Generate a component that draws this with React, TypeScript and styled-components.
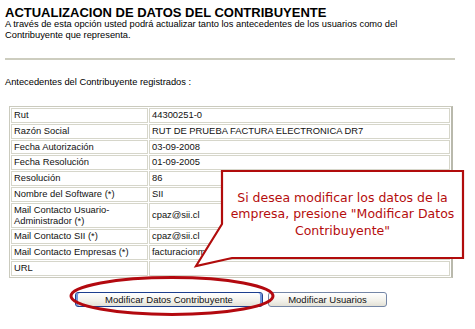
import React from "react";
import styled, { createGlobalStyle } from "styled-components";

const GlobalStyle = createGlobalStyle`
	html, body {
		margin: 0;
		padding: 0;
		background: #ffffff;
	}
	body {
		font-family: "Liberation Sans", Arial, sans-serif;
		color: #000000;
	}
`;

const Page = styled.div`
	position: relative;
	width: 475px;
	height: 329px;
	box-sizing: border-box;
	padding: 6px 0 0 5px;
	overflow: hidden;
`;

const Title = styled.h1`
	margin: 0;
	font-size: 13px;
	line-height: 13px;
	font-weight: bold;
`;

const Intro = styled.p`
	margin: 0;
	font-size: 9.3px;
	line-height: 11px;
	width: 420px;
`;

const Rule = styled.hr`
	margin: 17px 0 0 0;
	width: 450px;
	border: none;
	border-top: 2px solid #cdcdbf;
	height: 0;
`;

const Caption = styled.p`
	margin: 17px 0 0 0;
	font-size: 9.3px;
	line-height: 11px;
`;

const DataTable = styled.table`
	margin: 18px 0 0 4px;
	width: 444px;
	border-collapse: separate;
	border-spacing: 1px;
	border: 1px solid #cbcbbe;
	border-right: 2px solid #b9b9ac;
	font-size: 9.4px;
	line-height: 10.8px;
`;

const Cell = styled.td<{ $label?: boolean }>`
	border: 1px solid #d6d6ca;
	padding: 1px 2px;
	vertical-align: middle;
	width: ${(p) => (p.$label ? "131px" : "auto")};
	color: #111111;
`;

const ButtonRow = styled.div`
	display: flex;
	justify-content: center;
	gap: 5px;
	width: 444px;
	margin: 14px 0 0 4px;
`;

const Button = styled.button<{ $focused?: boolean; $width: number }>`
	width: ${(p) => p.$width}px;
	height: 15px;
	padding: 0;
	font-family: "Liberation Sans", Arial, sans-serif;
	font-size: 9.5px;
	line-height: 11px;
	color: #111111;
	border-radius: 3px;
	background: linear-gradient(#ffffff, #f2f1ea 60%, #e3e1d6);
	border: 1px solid ${(p) => (p.$focused ? "#1d3f8e" : "#7486a6")};
	box-shadow: ${(p) =>
		p.$focused ? "inset 2px 0 0 #6f95dc, inset -2px 0 0 #6f95dc" : "none"};
`;

const Callout = styled.div`
	position: absolute;
	left: 190px;
	top: 165px;
	width: 280px;
	height: 105px;
`;

const CalloutShape = styled.svg`
	position: absolute;
	left: 0;
	top: 0;
`;

const CalloutText = styled.div`
	position: absolute;
	left: 32px;
	top: 6px;
	width: 241px;
	height: 87px;
	display: flex;
	align-items: center;
	justify-content: center;
	text-align: center;
	font-family: "DejaVu Sans", Verdana, sans-serif;
	font-size: 12.5px;
	line-height: 16.5px;
	color: #b50d0d;
`;

const Highlight = styled.svg`
	position: absolute;
	left: 68px;
	top: 275px;
`;

const rows: [string, string][] = [
	["Rut", "44300251-0"],
	["Razón Social", "RUT DE PRUEBA FACTURA ELECTRONICA DR7"],
	["Fecha Autorización", "03-09-2008"],
	["Fecha Resolución", "01-09-2005"],
	["Resolución", "86"],
	["Nombre del Software (*)", "SII"],
	["Mail Contacto Usuario-Administrador (*)", "cpaz@sii.cl"],
	["Mail Contacto SII (*)", "cpaz@sii.cl"],
	["Mail Contacto Empresas (*)", "facturacionmipyme@sii.cl"],
	["URL", ""],
];

export default function App() {
	return (
		<Page>
			<GlobalStyle />
			<Title>ACTUALIZACION DE DATOS DEL CONTRIBUYENTE</Title>
			<Intro>
				A través de esta opción usted podrá actualizar tanto los antecedentes de los
				usuarios como del Contribuyente que representa.
			</Intro>
			<Rule />
			<Caption>Antecedentes del Contribuyente registrados :</Caption>
			<DataTable>
				<tbody>
					{rows.map(([label, value]) => (
						<tr key={label}>
							<Cell $label>{label}</Cell>
							<Cell>{value || "\u00a0"}</Cell>
						</tr>
					))}
				</tbody>
			</DataTable>
			<ButtonRow>
				<Button $focused $width={188}>
					Modificar Datos Contribuyente
				</Button>
				<Button $width={119}>Modificar Usuarios</Button>
			</ButtonRow>

			<Callout>
				<CalloutShape width="280" height="105" viewBox="0 0 280 105">
					<path
						d="M32 6 L273 6 L273 93 L42 93 L6 101 L32 59 Z"
						fill="#ffffff"
						stroke="#b10c0c"
						strokeWidth="2.2"
						strokeLinejoin="miter"
					/>
				</CalloutShape>
				<CalloutText>
					Si desea modificar los datos de la empresa, presione "Modificar Datos
					Contribuyente"
				</CalloutText>
			</Callout>

			<Highlight width="208" height="42" viewBox="0 0 208 42">
				<ellipse cx="104" cy="21" rx="101" ry="18.5" fill="none" stroke="#b3090f" strokeWidth="3" />
			</Highlight>
		</Page>
	);
}
